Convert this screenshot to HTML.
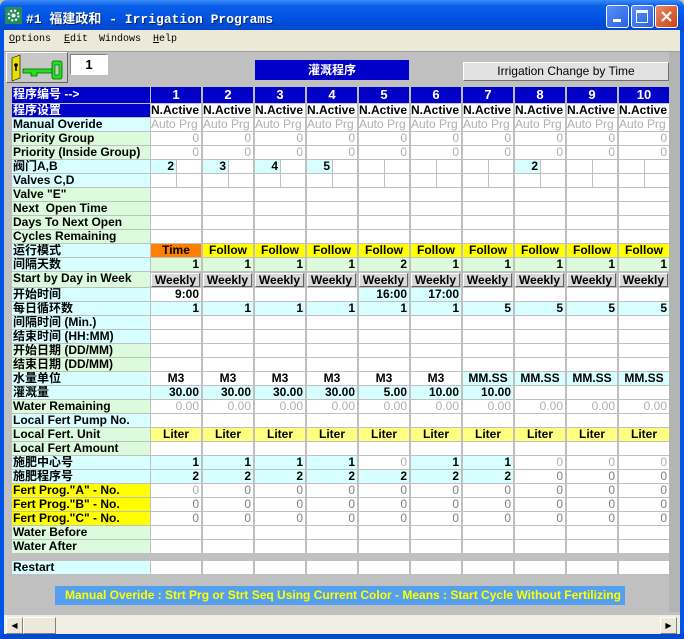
<!DOCTYPE html>
<html><head><meta charset="utf-8"><style>
*{margin:0;padding:0}
body{width:684px;height:639px;position:relative;overflow:hidden;background:#c0c0c0;font-family:"Liberation Sans","Noto Sans CJK SC",sans-serif}
.ab{position:absolute}
#title{left:0;top:0;width:684px;height:30px;background:linear-gradient(#3a8cf8,#0a5ee8 20%,#0054e3 60%,#0048cc);border-radius:7px 7px 0 0}
#title span{position:absolute;left:26px;top:8px;color:#fff;font:bold 13px "Liberation Mono","Noto Sans CJK SC",monospace;text-shadow:1px 1px #0a246a;white-space:nowrap}
.tb{position:absolute;top:5px;width:21px;height:21px;border:1px solid #fff;border-radius:3px;background:linear-gradient(135deg,#5a8ff8,#2563e0)}
#menu{left:4px;top:30px;width:676px;height:21px;background:#ece9d8;border-bottom:1px solid #a0a0a0}
#menu span{position:absolute;top:4px;font:10px "Liberation Mono",monospace;color:#000}
#lb{left:0;top:30px;width:4px;height:609px;background:#0054e3}
#rb{left:680px;top:30px;width:4px;height:609px;background:#0054e3}
#bb{left:0;top:634px;width:684px;height:5px;background:#0048cc}
.r{position:absolute;left:12px;display:flex;height:14px}
.r>div{box-sizing:border-box;border-right:2px solid #c0c0c0;border-bottom:1px solid #c0c0c0;width:52px;height:100%;background:#fff;font:bold 12px/13px "Liberation Sans","Noto Sans CJK SC",sans-serif;text-align:right;padding-right:2px;white-space:nowrap;overflow:hidden;color:#000}
.r>div.l{width:139px;border-right-width:1px;text-align:left;padding-left:1px}
.r>div.s{display:flex;padding:0;background:#c0c0c0}
.s>i{display:block;width:25px;height:100%;background:#fff;font-style:normal;text-align:right;padding-right:2px;box-sizing:border-box}
.s>i+i{margin-left:1px;width:24px}
.c,.s>i.c{background:#d8ffff!important}
.g{background:#dcfadc!important}
.y{background:#ffff00!important}
.ly{background:#ffff80!important}
.o{background:#ff8000!important}
.bl{background:#0000c8!important;color:#fff!important}
.ce{text-align:center!important;padding-right:0!important}
.le{text-align:left!important;padding:0!important}
.gr{color:#b0b0b0!important;font-weight:normal!important}
.dg{color:#808080!important;font-weight:normal!important}
.wk{background:#c0c0c0!important;padding:0!important}
.wk b{display:block;margin:1px 1px 0 0;height:12px;background:#d8d8d8;border:1px solid;border-color:#fff #606060 #606060 #fff;text-align:center;font:bold 12px/12px "Liberation Sans",sans-serif}
</style></head><body>
<div id="title" class="ab">
<svg class="ab" style="left:5px;top:7px" width="17" height="17"><rect width="17" height="17" fill="#2a8a5a"/><circle cx="8.5" cy="8.5" r="5" fill="none" stroke="#fff" stroke-width="2" stroke-dasharray="2 2"/><circle cx="8.5" cy="8.5" r="2" fill="#fff"/></svg>
<span>#1 福建政和 - Irrigation Programs</span>
<div class="tb" style="left:606px"><div class="ab" style="left:6px;top:13px;width:8px;height:3px;background:#fff"></div></div>
<div class="tb" style="left:631px"><div class="ab" style="left:4px;top:4px;width:10px;height:9px;border:1px solid #fff;border-top-width:3px"></div></div>
<div class="tb" style="left:655px;background:linear-gradient(135deg,#e88a6a,#d04010)"><svg class="ab" style="left:4px;top:4px" width="13" height="13"><path d="M2 2L11 11M11 2L2 11" stroke="#fff" stroke-width="2.2"/></svg></div>
</div>
<div id="lb" class="ab"></div><div id="rb" class="ab"></div><div id="bb" class="ab"></div>
<div id="menu" class="ab">
<span style="left:5px"><u>O</u>ptions</span><span style="left:60px"><u>E</u>dit</span><span style="left:95px">Windows</span><span style="left:149px"><u>H</u>elp</span>
</div>
<div class="ab" style="left:6px;top:52px;width:60px;height:29px;background:#c8c8c8;border:1px solid;border-color:#fff #606060 #606060 #fff">
<svg width="60" height="29"><path d="M5 5L13 2L13 25L5 28Z" fill="#e8e000" stroke="#000" stroke-width="0.6"/><circle cx="9" cy="12" r="1.8" fill="#000"/><path d="M8.2 12h1.6v6h-1.6z" fill="#000"/><path d="M16 16h30v4H30v3h-6v-3h-8z" fill="#20e020" stroke="#006000" stroke-width="0.8"/><rect x="45" y="8" width="10" height="18" rx="2" fill="#20e020" stroke="#006000" stroke-width="0.8"/><rect x="48" y="12" width="4" height="10" fill="#c8c8c8" stroke="#006000" stroke-width="0.6"/></svg></div>
<div class="ab" style="left:70px;top:54px;width:36px;height:19px;background:#fff;border:1px solid;border-color:#808080 #fff #fff #808080;font:bold 13px/19px 'Liberation Sans',sans-serif;text-align:center">1</div>
<div class="ab" style="left:255px;top:60px;width:154px;height:20px;background:#0000c8;color:#fff;font:bold 12px/20px 'Noto Sans CJK SC',sans-serif;text-align:center">灌溉程序</div>
<div class="ab" style="left:463px;top:62px;width:204px;height:17px;background:#e2e2e2;border:1px solid;border-color:#fff #707070 #707070 #fff;font:12px/17px 'Liberation Sans',sans-serif;text-align:center">Irrigation Change by Time</div>

<div class="r" style="top:87px;height:17px"><div class="l bl" style="line-height:15px">程序编号 --&gt;</div><div class="bl ce" style="font-size:13px;line-height:16px">1</div><div class="bl ce" style="font-size:13px;line-height:16px">2</div><div class="bl ce" style="font-size:13px;line-height:16px">3</div><div class="bl ce" style="font-size:13px;line-height:16px">4</div><div class="bl ce" style="font-size:13px;line-height:16px">5</div><div class="bl ce" style="font-size:13px;line-height:16px">6</div><div class="bl ce" style="font-size:13px;line-height:16px">7</div><div class="bl ce" style="font-size:13px;line-height:16px">8</div><div class="bl ce" style="font-size:13px;line-height:16px">9</div><div class="bl ce" style="font-size:13px;line-height:16px">10</div></div>
<div class="r" style="top:104px"><div class="l bl">程序设置</div><div class="le">N.Active</div><div class="le">N.Active</div><div class="le">N.Active</div><div class="le">N.Active</div><div class="le">N.Active</div><div class="le">N.Active</div><div class="le">N.Active</div><div class="le">N.Active</div><div class="le">N.Active</div><div class="le">N.Active</div></div>
<div class="r" style="top:118px"><div class="l c">Manual Overide</div><div class="le gr">Auto Prg</div><div class="le gr">Auto Prg</div><div class="le gr">Auto Prg</div><div class="le gr">Auto Prg</div><div class="le gr">Auto Prg</div><div class="le gr">Auto Prg</div><div class="le gr">Auto Prg</div><div class="le gr">Auto Prg</div><div class="le gr">Auto Prg</div><div class="le gr">Auto Prg</div></div>
<div class="r" style="top:132px"><div class="l g">Priority Group</div><div class="gr">0</div><div class="gr">0</div><div class="gr">0</div><div class="gr">0</div><div class="gr">0</div><div class="gr">0</div><div class="gr">0</div><div class="gr">0</div><div class="gr">0</div><div class="gr">0</div></div>
<div class="r" style="top:146px"><div class="l g">Priority (Inside Group)</div><div class="gr">0</div><div class="gr">0</div><div class="gr">0</div><div class="gr">0</div><div class="gr">0</div><div class="gr">0</div><div class="gr">0</div><div class="gr">0</div><div class="gr">0</div><div class="gr">0</div></div>
<div class="r" style="top:160px"><div class="l c">阀门A,B</div><div class="s"><i class="c">2</i><i></i></div><div class="s"><i class="c">3</i><i></i></div><div class="s"><i class="c">4</i><i></i></div><div class="s"><i class="c">5</i><i></i></div><div class="s"><i></i><i></i></div><div class="s"><i></i><i></i></div><div class="s"><i></i><i></i></div><div class="s"><i class="c">2</i><i></i></div><div class="s"><i></i><i></i></div><div class="s"><i></i><i></i></div></div>
<div class="r" style="top:174px"><div class="l c">Valves C,D</div><div class="s"><i></i><i></i></div><div class="s"><i></i><i></i></div><div class="s"><i></i><i></i></div><div class="s"><i></i><i></i></div><div class="s"><i></i><i></i></div><div class="s"><i></i><i></i></div><div class="s"><i></i><i></i></div><div class="s"><i></i><i></i></div><div class="s"><i></i><i></i></div><div class="s"><i></i><i></i></div></div>
<div class="r" style="top:188px"><div class="l g">Valve "E"</div><div></div><div></div><div></div><div></div><div></div><div></div><div></div><div></div><div></div><div></div></div>
<div class="r" style="top:202px"><div class="l g">Next&nbsp; Open Time</div><div></div><div></div><div></div><div></div><div></div><div></div><div></div><div></div><div></div><div></div></div>
<div class="r" style="top:216px"><div class="l g">Days To Next Open</div><div></div><div></div><div></div><div></div><div></div><div></div><div></div><div></div><div></div><div></div></div>
<div class="r" style="top:230px"><div class="l g">Cycles Remaining</div><div></div><div></div><div></div><div></div><div></div><div></div><div></div><div></div><div></div><div></div></div>
<div class="r" style="top:244px"><div class="l c">运行模式</div><div class="o ce">Time</div><div class="y ce">Follow</div><div class="y ce">Follow</div><div class="y ce">Follow</div><div class="y ce">Follow</div><div class="y ce">Follow</div><div class="y ce">Follow</div><div class="y ce">Follow</div><div class="y ce">Follow</div><div class="y ce">Follow</div></div>
<div class="r" style="top:258px"><div class="l c">间隔天数</div><div class="g">1</div><div class="g">1</div><div class="g">1</div><div class="g">1</div><div class="g">2</div><div class="g">1</div><div class="g">1</div><div class="g">1</div><div class="g">1</div><div class="g">1</div></div>
<div class="r" style="top:272px;height:16px"><div class="l g">Start by Day in Week</div><div class="wk"><b>Weekly</b></div><div class="wk"><b>Weekly</b></div><div class="wk"><b>Weekly</b></div><div class="wk"><b>Weekly</b></div><div class="wk"><b>Weekly</b></div><div class="wk"><b>Weekly</b></div><div class="wk"><b>Weekly</b></div><div class="wk"><b>Weekly</b></div><div class="wk"><b>Weekly</b></div><div class="wk"><b>Weekly</b></div></div>
<div class="r" style="top:288px"><div class="l c">开始时间</div><div>9:00</div><div></div><div></div><div></div><div class="c">16:00</div><div class="c">17:00</div><div></div><div></div><div></div><div></div></div>
<div class="r" style="top:302px"><div class="l c">每日循环数</div><div class="c">1</div><div class="c">1</div><div class="c">1</div><div class="c">1</div><div class="c">1</div><div class="c">1</div><div class="c">5</div><div class="c">5</div><div class="c">5</div><div class="c">5</div></div>
<div class="r" style="top:316px"><div class="l c">间隔时间 (Min.)</div><div></div><div></div><div></div><div></div><div></div><div></div><div></div><div></div><div></div><div></div></div>
<div class="r" style="top:330px"><div class="l c">结束时间 (HH:MM)</div><div></div><div></div><div></div><div></div><div></div><div></div><div></div><div></div><div></div><div></div></div>
<div class="r" style="top:344px"><div class="l g">开始日期 (DD/MM)</div><div></div><div></div><div></div><div></div><div></div><div></div><div></div><div></div><div></div><div></div></div>
<div class="r" style="top:358px"><div class="l g">结束日期 (DD/MM)</div><div></div><div></div><div></div><div></div><div></div><div></div><div></div><div></div><div></div><div></div></div>
<div class="r" style="top:372px"><div class="l c">水量单位</div><div class="ce">M3</div><div class="ce">M3</div><div class="ce">M3</div><div class="ce">M3</div><div class="ce">M3</div><div class="ce">M3</div><div class="c ce">MM.SS</div><div class="c ce">MM.SS</div><div class="c ce">MM.SS</div><div class="c ce">MM.SS</div></div>
<div class="r" style="top:386px"><div class="l c">灌溉量</div><div class="c">30.00</div><div class="c">30.00</div><div class="c">30.00</div><div class="c">30.00</div><div class="c">5.00</div><div class="c">10.00</div><div class="c">10.00</div><div></div><div></div><div></div></div>
<div class="r" style="top:400px"><div class="l g">Water Remaining</div><div class="gr">0.00</div><div class="gr">0.00</div><div class="gr">0.00</div><div class="gr">0.00</div><div class="gr">0.00</div><div class="gr">0.00</div><div class="gr">0.00</div><div class="gr">0.00</div><div class="gr">0.00</div><div class="gr">0.00</div></div>
<div class="r" style="top:414px"><div class="l c">Local Fert Pump No.</div><div></div><div></div><div></div><div></div><div></div><div></div><div></div><div></div><div></div><div></div></div>
<div class="r" style="top:428px"><div class="l g">Local Fert. Unit</div><div class="ly ce">Liter</div><div class="ly ce">Liter</div><div class="ly ce">Liter</div><div class="ly ce">Liter</div><div class="ly ce">Liter</div><div class="ly ce">Liter</div><div class="ly ce">Liter</div><div class="ly ce">Liter</div><div class="ly ce">Liter</div><div class="ly ce">Liter</div></div>
<div class="r" style="top:442px"><div class="l g">Local Fert Amount</div><div></div><div></div><div></div><div></div><div></div><div></div><div></div><div></div><div></div><div></div></div>
<div class="r" style="top:456px"><div class="l c">施肥中心号</div><div class="c">1</div><div class="c">1</div><div class="c">1</div><div class="c">1</div><div class="gr">0</div><div class="c">1</div><div class="c">1</div><div class="gr">0</div><div class="gr">0</div><div class="gr">0</div></div>
<div class="r" style="top:470px"><div class="l c">施肥程序号</div><div class="c">2</div><div class="c">2</div><div class="c">2</div><div class="c">2</div><div class="c">2</div><div class="c">2</div><div class="c">2</div><div class="dg">0</div><div class="dg">0</div><div class="dg">0</div></div>
<div class="r" style="top:484px"><div class="l y">Fert Prog."A" - No.</div><div class="gr">0</div><div class="dg">0</div><div class="dg">0</div><div class="dg">0</div><div class="dg">0</div><div class="dg">0</div><div class="dg">0</div><div class="dg">0</div><div class="dg">0</div><div class="dg">0</div></div>
<div class="r" style="top:498px"><div class="l y">Fert Prog."B" - No.</div><div class="dg">0</div><div class="dg">0</div><div class="dg">0</div><div class="dg">0</div><div class="dg">0</div><div class="dg">0</div><div class="dg">0</div><div class="dg">0</div><div class="dg">0</div><div class="dg">0</div></div>
<div class="r" style="top:512px"><div class="l y">Fert Prog."C" - No.</div><div class="dg">0</div><div class="dg">0</div><div class="dg">0</div><div class="dg">0</div><div class="dg">0</div><div class="dg">0</div><div class="dg">0</div><div class="dg">0</div><div class="dg">0</div><div class="dg">0</div></div>
<div class="r" style="top:526px"><div class="l g">Water Before</div><div></div><div></div><div></div><div></div><div></div><div></div><div></div><div></div><div></div><div></div></div>
<div class="r" style="top:540px"><div class="l g">Water After</div><div></div><div></div><div></div><div></div><div></div><div></div><div></div><div></div><div></div><div></div></div>
<div class="r" style="top:561px"><div class="l c">Restart</div><div></div><div></div><div></div><div></div><div></div><div></div><div></div><div></div><div></div><div></div></div>

<div class="ab" style="left:669px;top:52px;width:11px;height:560px;background:#b4b4b4"></div>
<div class="ab" style="left:55px;top:586px;width:570px;height:19px;background:#55a0ee;color:#ffff00;font:bold 12px/19px 'Liberation Sans',sans-serif;padding-left:10px;box-sizing:border-box;white-space:nowrap">Manual Overide : Strt Prg or Strt Seq Using Current Color - Means : Start Cycle Without Fertilizing</div>
<div class="ab" style="left:4px;top:615px;width:676px;height:19px;background:#f0eee4"></div>
<div class="ab" style="left:6px;top:617px;width:15px;height:15px;background:#ece9d8;border:1px solid;border-color:#fff #808080 #808080 #fff;font:8px/15px sans-serif;text-align:center">◀</div>
<div class="ab" style="left:23px;top:617px;width:31px;height:15px;background:#ece9d8;border:1px solid;border-color:#fff #808080 #808080 #fff"></div>
<div class="ab" style="left:660px;top:617px;width:15px;height:15px;background:#ece9d8;border:1px solid;border-color:#fff #808080 #808080 #fff;font:8px/15px sans-serif;text-align:center">▶</div>
</body></html>
